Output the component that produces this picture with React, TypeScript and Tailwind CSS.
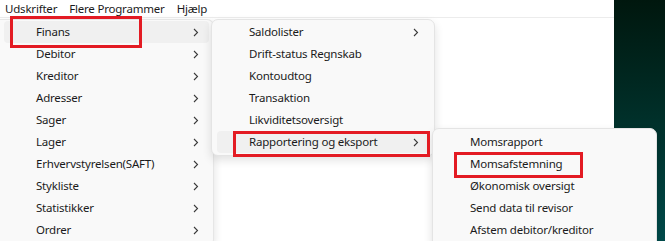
import React from "react";

const font = { fontFamily: '"Noto Sans", "Liberation Sans", sans-serif' };

interface Item {
  label: string;
  sub?: boolean;
  active?: boolean;
}

const finans: Item[] = [
  { label: "Finans", sub: true, active: true },
  { label: "Debitor", sub: true },
  { label: "Kreditor", sub: true },
  { label: "Adresser", sub: true },
  { label: "Sager", sub: true },
  { label: "Lager", sub: true },
  { label: "Erhvervstyrelsen(SAFT)", sub: true },
  { label: "Stykliste", sub: true },
  { label: "Statistikker", sub: true },
  { label: "Ordrer", sub: true },
];

const finansSub: Item[] = [
  { label: "Saldolister", sub: true },
  { label: "Drift-status Regnskab" },
  { label: "Kontoudtog" },
  { label: "Transaktion" },
  { label: "Likviditetsoversigt" },
  { label: "Rapportering og eksport", sub: true, active: true },
];

const rapport: Item[] = [
  { label: "Momsrapport" },
  { label: "Momsafstemning" },
  { label: "Økonomisk oversigt" },
  { label: "Send data til revisor" },
  { label: "Afstem debitor/kreditor" },
];

const Chevron = () => (
  <svg width="6" height="9" viewBox="0 0 6 9" className="shrink-0">
    <path d="M1 1l3.5 3.5L1 8" fill="none" stroke="#3a3a3a" strokeWidth="1.1" />
  </svg>
);

const MenuRow: React.FC<{ item: Item }> = ({ item }) => (
  <div
    className={`flex h-[22px] items-center rounded-[4px] pl-[32px] pr-[10px] ${
      item.active ? "bg-[#f0f0f0]" : ""
    }`}
  >
    <span className="flex-1 whitespace-nowrap text-[11.5px] tracking-[-0.2px] text-[#1b1b1b]">
      {item.label}
    </span>
    {item.sub && <Chevron />}
  </div>
);

const RedBox: React.FC<{ className: string }> = ({ className }) => (
  <div className={`absolute border-[3px] border-[#e31b23] ${className}`} />
);

export default function App() {
  return (
    <div className="relative flex h-[241px] w-[665px] overflow-hidden bg-white" style={font}>
      <div className="flex w-[614px] flex-col bg-white">
        <div className="flex h-[18px] items-center gap-[12px] border-b border-[#ececec] pl-[5px] text-[11.5px] tracking-[-0.2px] text-[#1b1b1b]">
          <span>Udskrifter</span>
          <span>Flere Programmer</span>
          <span>Hjælp</span>
        </div>
        <div className="flex-1" />
      </div>
      <div className="flex-1 bg-gradient-to-b from-[#00170e] via-[#00302a] to-[#004b4b]" />

      <div className="absolute left-0 top-[19px] flex w-[214px] flex-col rounded-r-[7px] border border-l-0 border-[#e6e6e6] bg-[#f9f9f9] px-[4px] pt-[1px] pb-[4px] shadow-[0_4px_10px_rgba(0,0,0,0.12)]">
        {finans.map((i) => (
          <MenuRow key={i.label} item={i} />
        ))}
      </div>

      <div className="absolute left-[211px] top-[19px] flex w-[224px] flex-col rounded-[7px] border border-[#e4e4e4] bg-[#f9f9f9] px-[5px] pt-[1px] pb-[2px] shadow-[0_4px_10px_rgba(0,0,0,0.12)]">
        {finansSub.map((i) => (
          <MenuRow key={i.label} item={i} />
        ))}
      </div>

      <div className="absolute left-[432px] top-[128px] flex w-[225px] flex-col rounded-[7px] border border-[#e4e4e4] bg-[#f9f9f9] px-[5px] pt-[2px] pb-[6px] shadow-[0_4px_10px_rgba(0,0,0,0.12)]">
        {rapport.map((i) => (
          <MenuRow key={i.label} item={i} />
        ))}
      </div>

      <RedBox className="left-[10px] top-[16px] h-[32px] w-[132px]" />
      <RedBox className="left-[233px] top-[131px] h-[26px] w-[197px]" />
      <RedBox className="left-[454px] top-[152px] h-[26px] w-[129px]" />
    </div>
  );
}
